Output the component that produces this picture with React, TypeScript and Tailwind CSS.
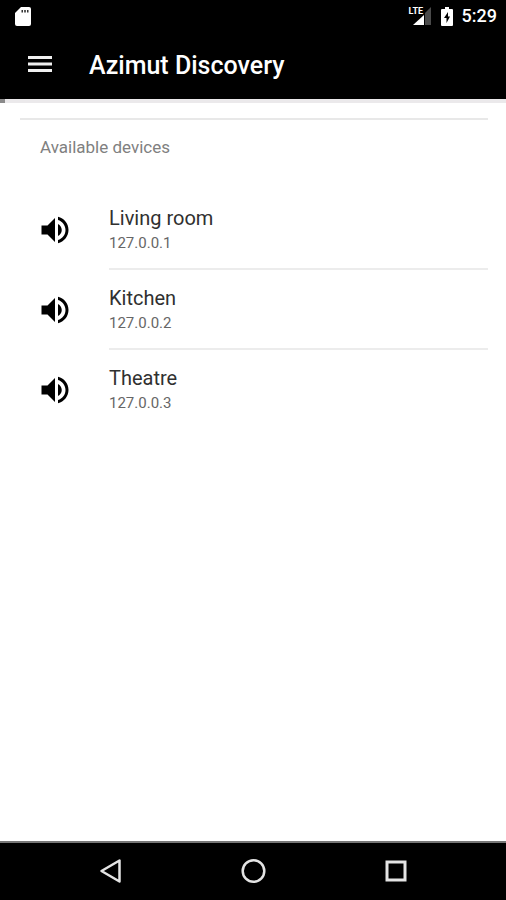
type Device = {
    name: string;
    address: string;
};

const devices: Device[] = [
    { name: 'Living room', address: '127.0.0.1' },
    { name: 'Kitchen', address: '127.0.0.2' },
    { name: 'Theatre', address: '127.0.0.3' },
];

function StatusBar() {
    return (
        <div className="flex h-8 items-center bg-black pl-[15px] pr-[9px] text-white">
            <svg className="h-[19px] w-4" viewBox="0 0 16 19" aria-hidden="true">
                <path d="M6 0h8a2 2 0 0 1 2 2v15a2 2 0 0 1-2 2H2a2 2 0 0 1-2-2V6z" fill="#fff" />
                <path d="M6.500 3H8v2.500H6.500zM9.200 3h1.600v2.500H9.200zM12 3h1.500v2.500H12z" fill="#333" />
            </svg>
            <div className="ml-auto flex items-center">
                <div className="relative h-[18px] w-[22px]">
                    <svg className="h-full w-full" viewBox="0 0 22 18" aria-hidden="true">
                        <path d="M16 6l6-6v18h-6z" fill="#4a4a4a" />
                        <path d="M4 18L15 8v10z" fill="#fff" />
                    </svg>
                    <span className="absolute left-0 top-0 bg-black font-['Liberation_Sans_Narrow','Roboto',sans-serif] text-[9px] font-bold leading-[9px]">LTE</span>
                </div>
                <svg className="ml-[10px] h-[19px] w-3" viewBox="0 0 12 19" aria-hidden="true">
                    <path d="M4 0h4v2h3a1 1 0 0 1 1 1v15a1 1 0 0 1-1 1H1a1 1 0 0 1-1-1V3a1 1 0 0 1 1-1h3z" fill="#fff" />
                    <path d="M7 5L3 11h2.500v5L9 9.500H7z" fill="#000" />
                </svg>
                <span className="ml-[9px] text-lg font-medium leading-5">5:29</span>
            </div>
        </div>
    );
}

function Header() {
    return (
        <header className="flex h-[67px] items-center bg-black pb-1 pl-6 text-white">
            <button type="button" aria-label="Open menu" className="cursor-pointer">
                <svg className="h-8 w-8" viewBox="0 0 24 24" fill="#f0f0f0" aria-hidden="true">
                    <path d="M3 18h18v-2.200H3V18zm0-4.900h18v-2.200H3v2.200zM3 6v2.200h18V6H3z" />
                </svg>
            </button>
            <h1 className="ml-[33px] pt-1 text-[25px] font-medium leading-8">Azimut Discovery</h1>
        </header>
    );
}

function DeviceRow({ device, last }: { device: Device; last: boolean }) {
    return (
        <li className="flex h-20 items-center pl-[37px] pr-[18px]">
            <svg className="h-9 w-9 shrink-0" viewBox="0 0 24 24" fill="#000" aria-hidden="true">
                <path d="M3 9v6h4l5 5V4L7 9H3zm13.500 3c0-1.770-1.020-3.290-2.500-4.030v8.050c1.480-.73 2.500-2.250 2.500-4.020zM14 3.230v2.060c2.890.86 5 3.540 5 6.710s-2.110 5.850-5 6.710v2.060c4.010-.91 7-4.490 7-8.770s-2.990-7.860-7-8.770z" />
            </svg>
            <div className={`ml-9 flex h-full flex-1 flex-col justify-center border-b-2 ${last ? 'border-transparent' : 'border-[#ececec]'}`}>
                <h2 className="text-xl leading-7 text-[#303030]">{device.name}</h2>
                <p className="text-[15px] leading-[22px] text-[#666]">{device.address}</p>
            </div>
        </li>
    );
}

function NavigationBar() {
    return (
        <nav className="flex h-[59px] items-center justify-center gap-[111px] border-t-2 border-[#777] bg-black pb-0.5">
            <button type="button" aria-label="Back" className="cursor-pointer">
                <svg className="h-8 w-8" viewBox="0 0 32 32" fill="none" stroke="#e4e4e4" strokeWidth="2.500" aria-hidden="true">
                    <path d="M25.500 5.500v21L7.500 16z" strokeLinejoin="round" />
                </svg>
            </button>
            <button type="button" aria-label="Home" className="cursor-pointer">
                <svg className="h-8 w-8" viewBox="0 0 32 32" fill="none" stroke="#e4e4e4" strokeWidth="2.500" aria-hidden="true">
                    <circle cx="16.500" cy="16" r="10.800" />
                </svg>
            </button>
            <button type="button" aria-label="Recent apps" className="cursor-pointer">
                <svg className="h-8 w-8" viewBox="0 0 32 32" fill="none" stroke="#e4e4e4" strokeWidth="3" aria-hidden="true">
                    <rect x="7" y="7" width="18" height="18" />
                </svg>
            </button>
        </nav>
    );
}

export default function App() {
    return (
        <div className="flex min-h-screen flex-col bg-white font-['Roboto',sans-serif]">
            <StatusBar />
            <Header />
            <div className="h-1 bg-[#ebe9eb]">
                <div className="h-full w-[5px] bg-[#8a8a8a]"></div>
            </div>
            <main className="flex-1">
                <hr className="ml-5 mr-[18px] mt-[15px] border-t-2 border-[#e8e8e8]" />
                <p className="mb-[31px] mt-[15px] pl-10 text-[17px] leading-6 text-[#808080]">Available devices</p>
                <ul>
                    {devices.map((device, index) => (
                        <DeviceRow key={device.address} device={device} last={index === devices.length - 1} />
                    ))}
                </ul>
            </main>
            <NavigationBar />
        </div>
    );
}
